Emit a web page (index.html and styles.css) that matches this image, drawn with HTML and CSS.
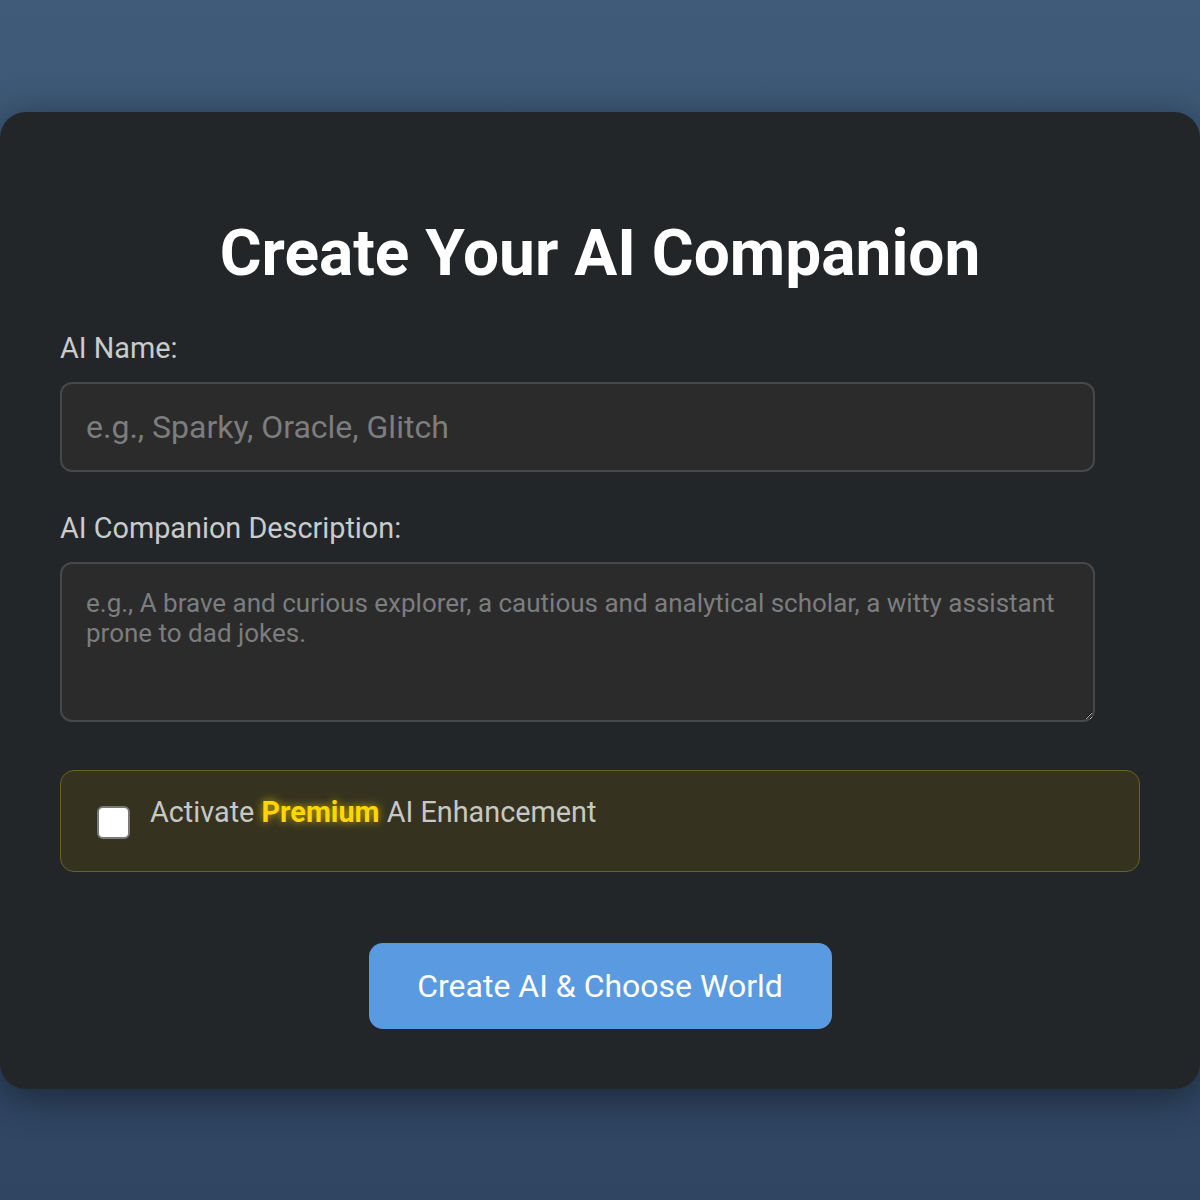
FILE: index.html
```html
<!DOCTYPE html>
<html lang="en">
<head>
<meta charset="utf-8">
<title>Create Your AI Companion</title>
<link rel="stylesheet" href="styles.css">
</head>
<body>
<main class="card">
  <h1 class="title">Create Your AI Companion</h1>
  <form class="form">
    <label class="label" for="ai-name">AI Name:</label>
    <input class="input" id="ai-name" type="text" placeholder="e.g., Sparky, Oracle, Glitch">
    <label class="label" for="ai-desc">AI Companion Description:</label>
    <textarea class="textarea" id="ai-desc" placeholder="e.g., A brave and curious explorer, a cautious and analytical scholar, a witty assistant prone to dad jokes."></textarea>
    <div class="premium">
      <input class="check" id="premium" type="checkbox">
      <label class="premium-label" for="premium">Activate <span class="premium-word">Premium</span> AI Enhancement</label>
    </div>
    <div class="actions">
      <button class="button" type="button">Create AI &amp; Choose World</button>
    </div>
  </form>
</main>
</body>
</html>
```

FILE: styles.css
```css
* { box-sizing: border-box; }
html, body { height: 100%; }
body {
  margin: 0;
  min-height: 1200px;
  padding: 112px 0 0;
  font-family: Roboto, "Liberation Sans", sans-serif;
  background: linear-gradient(180deg, #3f5b79 0%, #344b68 60%, #2f4562 100%);
}
.card {
  background: #222629;
  border-radius: 26px;
  padding: 104px 60px 60px;
  box-shadow: 0 8px 40px rgba(0, 0, 0, 0.45);
}
.title {
  margin: 0 0 40px;
  text-align: center;
  color: #ffffff;
  font-size: 64px;
  font-weight: 700;
  line-height: 76px;
}
.form { display: flex; flex-direction: column; }
.label {
  color: #c9cbcc;
  font-size: 28.8px;
  line-height: 32px;
  margin-bottom: 18px;
}
.input, .textarea {
  width: 1035px;
  background: #2b2b2b;
  border: 2px solid #47484a;
  border-radius: 12px;
  color: #e0e0e0;
  font-family: Roboto, "Liberation Sans", sans-serif;
  padding: 0 24px;
}
.input {
  height: 90px;
  font-size: 32px;
  margin-bottom: 40px;
}
.textarea {
  height: 160px;
  padding-top: 24px;
  font-size: 26px;
  line-height: 30px;
  resize: vertical;
  margin-bottom: 48px;
}
.input::placeholder, .textarea::placeholder { color: #7c7d7e; }
.premium {
  display: flex;
  align-items: flex-start;
  gap: 20px;
  height: 102px;
  padding: 26px 36px;
  background: #35331f;
  border: 1.5px solid #6a6123;
  border-radius: 14px;
}
.check {
  appearance: none;
  flex: none;
  width: 33px;
  height: 33px;
  margin: 9px 0 0;
  background: #ffffff;
  border: 2.5px solid #7a7a7a;
  border-radius: 6px;
}
.premium-label {
  color: #c7c8c5;
  font-size: 28.8px;
  line-height: 30px;
}
.premium-word {
  color: #ffd700;
  font-weight: 700;
  text-shadow: 0 0 8px rgba(255, 215, 0, 0.75);
}
.actions {
  display: flex;
  justify-content: center;
  margin-top: 71px;
}
.button {
  width: 463px;
  height: 86px;
  background: #5a9ae0;
  color: #ffffff;
  border: none;
  border-radius: 14px;
  font-family: Roboto, "Liberation Sans", sans-serif;
  font-size: 32px;
}
```
